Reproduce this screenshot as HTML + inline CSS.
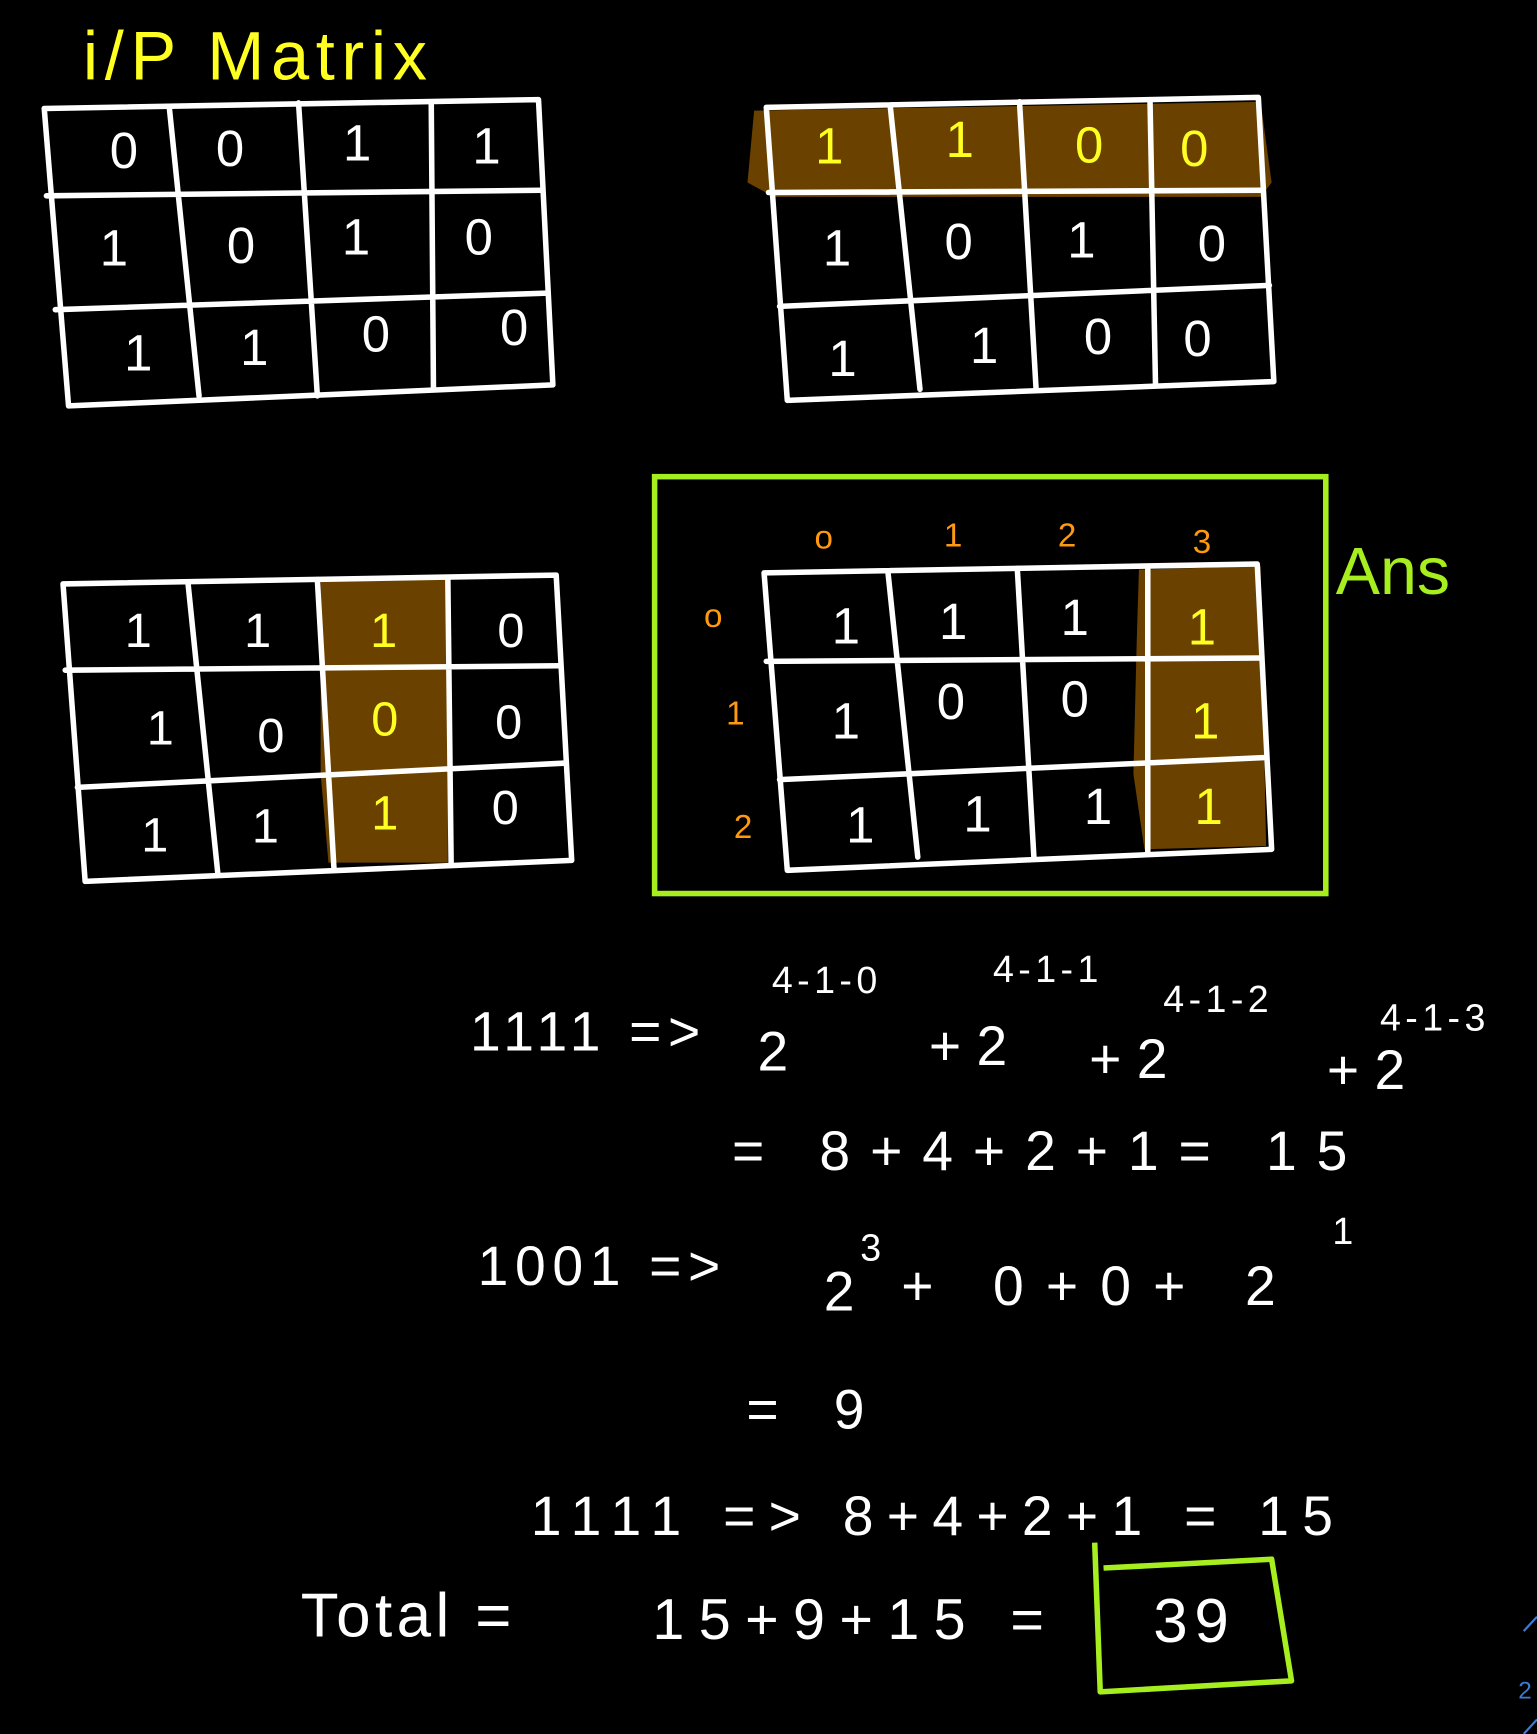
<!DOCTYPE html>
<html><head><meta charset="utf-8"><style>
html,body{margin:0;padding:0;background:#000;width:1537px;height:1734px;overflow:hidden}
svg{display:block}
text{font-family:"Liberation Sans",sans-serif}
</style></head><body>
<svg width="1537" height="1734" viewBox="0 0 1390 1568" xmlns="http://www.w3.org/2000/svg">
<rect width="1390" height="1568" fill="#000"/>
<text x="75" y="72" font-size="62" fill="#ffff22" letter-spacing="6">i/P  Matrix</text>

<g fill="none" stroke="#fff" stroke-width="5" stroke-linejoin="round" stroke-linecap="round">
<path d="M40 98 L487 90 L500 348 L62 367 Z"/>
<path d="M42 177 L490 172 M50 280 L495 265 M153 96 L180 358 M270 93 L287 358 M390 92 L392 352"/>
</g>
<g font-size="46" fill="#fff" text-anchor="middle">
<text x="112" y="152">0</text><text x="208" y="150">0</text><text x="323" y="145">1</text><text x="440" y="148">1</text>
<text x="103" y="240">1</text><text x="218" y="238">0</text><text x="322" y="230">1</text><text x="433" y="230">0</text>
<text x="125" y="335">1</text><text x="230" y="330">1</text><text x="340" y="318">0</text><text x="465" y="312">0</text>
</g>

<path d="M682 100 L1140 92 L1150 165 L1140 178 L700 178 L676 165 Z" fill="#6b4100"/>
<g fill="none" stroke="#fff" stroke-width="5" stroke-linejoin="round" stroke-linecap="round">
<path d="M693 97 L1138 88 L1152 345 L712 362 Z"/>
<path d="M695 174 L1142 172 M705 277 L1148 258 M805 95 L832 352 M922 92 L937 352 M1040 90 L1045 348"/>
</g>
<g font-size="46" text-anchor="middle">
<text x="750" y="148" fill="#ffff22">1</text><text x="868" y="142" fill="#ffff22">1</text><text x="985" y="147" fill="#ffff22">0</text><text x="1080" y="150" fill="#ffff22">0</text>
<g fill="#fff"><text x="757" y="240">1</text><text x="867" y="234">0</text><text x="978" y="233">1</text><text x="1096" y="236">0</text>
<text x="762" y="340">1</text><text x="890" y="328">1</text><text x="993" y="320">0</text><text x="1083" y="322">0</text></g>
</g>

<path d="M290 525 L405 522 L405 780 L297 780 L290 700 Z" fill="#6b4100"/>
<g fill="none" stroke="#fff" stroke-width="5" stroke-linejoin="round" stroke-linecap="round">
<path d="M57 528 L503 520 L517 778 L77 797 Z"/>
<path d="M59 606 L506 602 M70 712 L512 690 M170 527 L197 790 M287 524 L302 785 M405 522 L408 782"/>
</g>
<g font-size="44" text-anchor="middle">
<text x="125" y="585" fill="#fff">1</text><text x="233" y="585" fill="#fff">1</text><text x="347" y="585" fill="#ffff22">1</text><text x="462" y="585" fill="#fff">0</text>
<text x="145" y="673" fill="#fff">1</text><text x="245" y="680" fill="#fff">0</text><text x="348" y="665" fill="#ffff22">0</text><text x="460" y="668" fill="#fff">0</text>
<text x="140" y="770" fill="#fff">1</text><text x="240" y="762" fill="#fff">1</text><text x="348" y="750" fill="#ffff22">1</text><text x="457" y="745" fill="#fff">0</text>
</g>

<rect x="592" y="431" width="607" height="377" fill="none" stroke="#a6ee1e" stroke-width="5"/>
<text x="1208" y="537" font-size="60" fill="#a6ee1e">Ans</text>
<path d="M1030 515 L1140 512 L1145 765 L1035 768 L1025 700 L1028 580 Z" fill="#6b4100"/>
<g fill="none" stroke="#fff" stroke-width="5" stroke-linejoin="round" stroke-linecap="round">
<path d="M691 518 L1137 510 L1150 768 L712 787 Z"/>
<path d="M693 598 L1140 595 M705 705 L1145 685 M803 517 L830 775 M920 514 L935 775 M1038 512 L1038 770"/>
</g>
<g font-size="30" fill="#ff9a10" text-anchor="middle">
<text x="745" y="496">o</text><text x="862" y="494">1</text><text x="965" y="494">2</text><text x="1087" y="500">3</text>
<text x="645" y="567">o</text><text x="665" y="655">1</text><text x="672" y="758">2</text>
</g>
<g font-size="46" text-anchor="middle">
<text x="765" y="582" fill="#fff">1</text><text x="862" y="578" fill="#fff">1</text><text x="972" y="574" fill="#fff">1</text><text x="1087" y="583" fill="#ffff22">1</text>
<text x="765" y="668" fill="#fff">1</text><text x="860" y="650" fill="#fff">0</text><text x="972" y="648" fill="#fff">0</text><text x="1090" y="668" fill="#ffff22">1</text>
<text x="778" y="762" fill="#fff">1</text><text x="884" y="752" fill="#fff">1</text><text x="993" y="745" fill="#fff">1</text><text x="1093" y="745" fill="#ffff22">1</text>
</g>

<g fill="#fff" font-size="50">
<text x="425" y="950" letter-spacing="6">1111 =&gt;</text>
<text x="685" y="968">2</text>
<text x="698" y="898" font-size="34" letter-spacing="4">4-1-0</text>
<text x="840" y="963">+ 2</text>
<text x="898" y="888" font-size="34" letter-spacing="4">4-1-1</text>
<text x="985" y="975">+ 2</text>
<text x="1052" y="915" font-size="34" letter-spacing="4">4-1-2</text>
<text x="1200" y="985">+ 2</text>
<text x="1248" y="932" font-size="34" letter-spacing="4">4-1-3</text>
<text x="662" y="1058" letter-spacing="18">= 8+4+2+1=  15</text>
<text x="432" y="1162" letter-spacing="6">1001 =&gt;</text>
<text x="745" y="1185">2</text><text x="778" y="1140" font-size="34">3</text>
<text x="815" y="1180" letter-spacing="20">+ 0+0+ 2</text>
<text x="1205" y="1125" font-size="34">1</text>
<text x="675" y="1292" letter-spacing="18">= 9</text>
<text x="480" y="1388" letter-spacing="12">1111  =&gt; 8+4+2+1 = 15</text>
<text x="272" y="1480" font-size="56" letter-spacing="4">Total =</text>
<text x="590" y="1482" font-size="52" letter-spacing="13">15+9+15 =</text>
<text x="1043" y="1485" font-size="56" letter-spacing="6">39</text>
</g>
<path d="M990 1395 L995 1530 L1168 1520 L1150 1410 L998 1418" fill="none" stroke="#a6ee1e" stroke-width="5" stroke-linejoin="round"/>
<path d="M1378 1475 L1390 1462 M1378 1568 L1390 1555" stroke="#3a7bd5" stroke-width="2"/>
<text x="1373" y="1536" font-size="22" fill="#3a7bd5">2</text>
</svg>
</body></html>
